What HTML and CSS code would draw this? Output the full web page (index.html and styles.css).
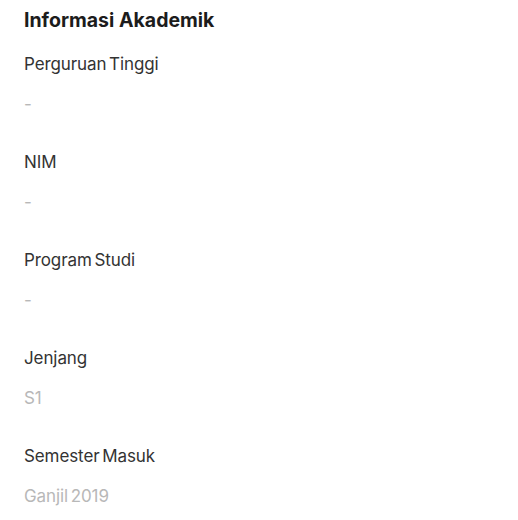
FILE: index.html
```html
<!DOCTYPE html>
<html lang="id">
<head>
<meta charset="utf-8">
<link rel="stylesheet" href="styles.css">
</head>
<body>
<section class="card">
  <h2 class="title">Informasi Akademik</h2>
  <div class="fields">
    <div class="field"><div class="label">Perguruan Tinggi</div><div class="value">-</div></div>
    <div class="field"><div class="label">NIM</div><div class="value">-</div></div>
    <div class="field"><div class="label">Program Studi</div><div class="value">-</div></div>
    <div class="field"><div class="label">Jenjang</div><div class="value">S1</div></div>
    <div class="field"><div class="label">Semester Masuk</div><div class="value">Ganjil 2019</div></div>
  </div>
</section>
</body>
</html>
```
FILE: styles.css
```css
html, body { margin: 0; padding: 0; background: #fff; }
body { font-family: Inter, "Noto Sans", sans-serif; color: #2b2b2b; }
.card { padding: 8px 24px; display: flex; flex-direction: column; gap: 20px; }
.title { margin: 0; font-size: 19.5px; line-height: 24px; font-weight: 700; color: #1c1c1c; letter-spacing: 0; }
.fields { display: flex; flex-direction: column; gap: 34px; }
.field { display: flex; flex-direction: column; gap: 16px; }
.label { font-size: 17px; line-height: 24px; color: #333; letter-spacing: -0.1px; word-spacing: -2px; }
.value { font-size: 17px; line-height: 24px; color: #b8b8b8; letter-spacing: -0.1px; word-spacing: -2px; }
```
